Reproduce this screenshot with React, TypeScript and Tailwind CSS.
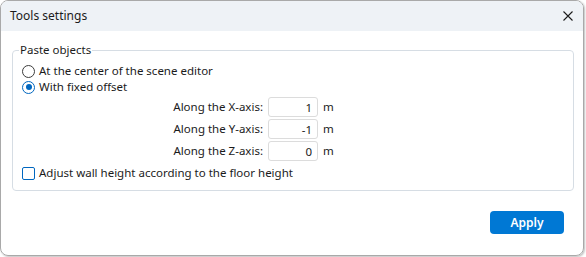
import { useState } from 'react';

const font = { fontFamily: '"Segoe UI", "Noto Sans", sans-serif' };

const Radio = ({ checked, label, onClick }: { checked: boolean; label: string; onClick: () => void }) => (
  <button onClick={onClick} className="flex items-center h-[16px] gap-[4px] text-left">
    {checked ? (
      <span className="w-[13px] h-[13px] rounded-full border-[1.5px] border-[#0067c0] flex items-center justify-center bg-white">
        <span className="w-[6px] h-[6px] rounded-full bg-[#0067c0]" />
      </span>
    ) : (
      <span className="w-[13px] h-[13px] rounded-full border border-[#3c3c3c] bg-white" />
    )}
    <span>{label}</span>
  </button>
);

const axes = [
  { label: 'Along the X-axis:', value: '1' },
  { label: 'Along the Y-axis:', value: '-1' },
  { label: 'Along the Z-axis:', value: '0' },
];

export default function App() {
  const [mode, setMode] = useState('offset');
  const [adjust, setAdjust] = useState(false);

  return (
    <div className="w-[586px] h-[257px] bg-white text-[11.5px] text-[#1b1b1b]" style={font}>
      <div className="w-[584px] h-[256px] flex flex-col border border-[#a9a9a9] rounded-[8px] overflow-hidden shadow-[1px_1px_2px_rgba(0,0,0,0.25)]">
        {/* Title bar */}
        <div className="h-[30px] shrink-0 bg-[#eef2f6] flex items-center justify-between pl-[9px] pr-[8px]">
          <span className="text-[12px]">Tools settings</span>
          <svg width="10" height="10" viewBox="0 0 10 10" className="mr-[2px]">
            <path d="M0.5 0.5 L9.5 9.5 M9.5 0.5 L0.5 9.5" stroke="#1b1b1b" strokeWidth="1.1" />
          </svg>
        </div>

        <div className="flex-1 flex flex-col pl-[11px] pr-[9px] pt-[11px]">
          <fieldset className="border border-[#d6dde4] rounded-[4px] pl-[9px] pt-[5px] pb-[9px]">
            <legend className="-ml-[3px] px-[1px] leading-[16px]">Paste objects</legend>
            <Radio checked={mode === 'center'} label="At the center of the scene editor" onClick={() => setMode('center')} />
            <Radio checked={mode === 'offset'} label="With fixed offset" onClick={() => setMode('offset')} />

            <div className="mt-[1px] flex flex-col">
              {axes.map((a) => (
                <div key={a.label} className="flex items-center h-[22px]">
                  <span className="w-[241px] text-right">{a.label}</span>
                  <input
                    defaultValue={a.value}
                    className="ml-[5px] w-[50px] h-[20px] border border-[#dcdcdc] rounded-[3px] text-right pr-[5px] outline-none bg-white"
                  />
                  <span className="ml-[5px]">m</span>
                </div>
              ))}
            </div>

            <button onClick={() => setAdjust(!adjust)} className="mt-[3px] flex items-center h-[16px] gap-[4px]">
              <span className={`w-[13px] h-[13px] rounded-[2px] border ${adjust ? 'bg-[#0067c0] border-[#0067c0]' : 'border-[#0067c0] bg-white'}`} />
              <span>Adjust wall height according to the floor height</span>
            </button>
          </fieldset>

          <div className="flex justify-end mt-[20px] pr-[10px]">
            <button className="w-[74px] h-[23px] rounded-[4px] bg-[#0078d4] text-white text-[12px] font-semibold">Apply</button>
          </div>
        </div>
      </div>
    </div>
  );
}
